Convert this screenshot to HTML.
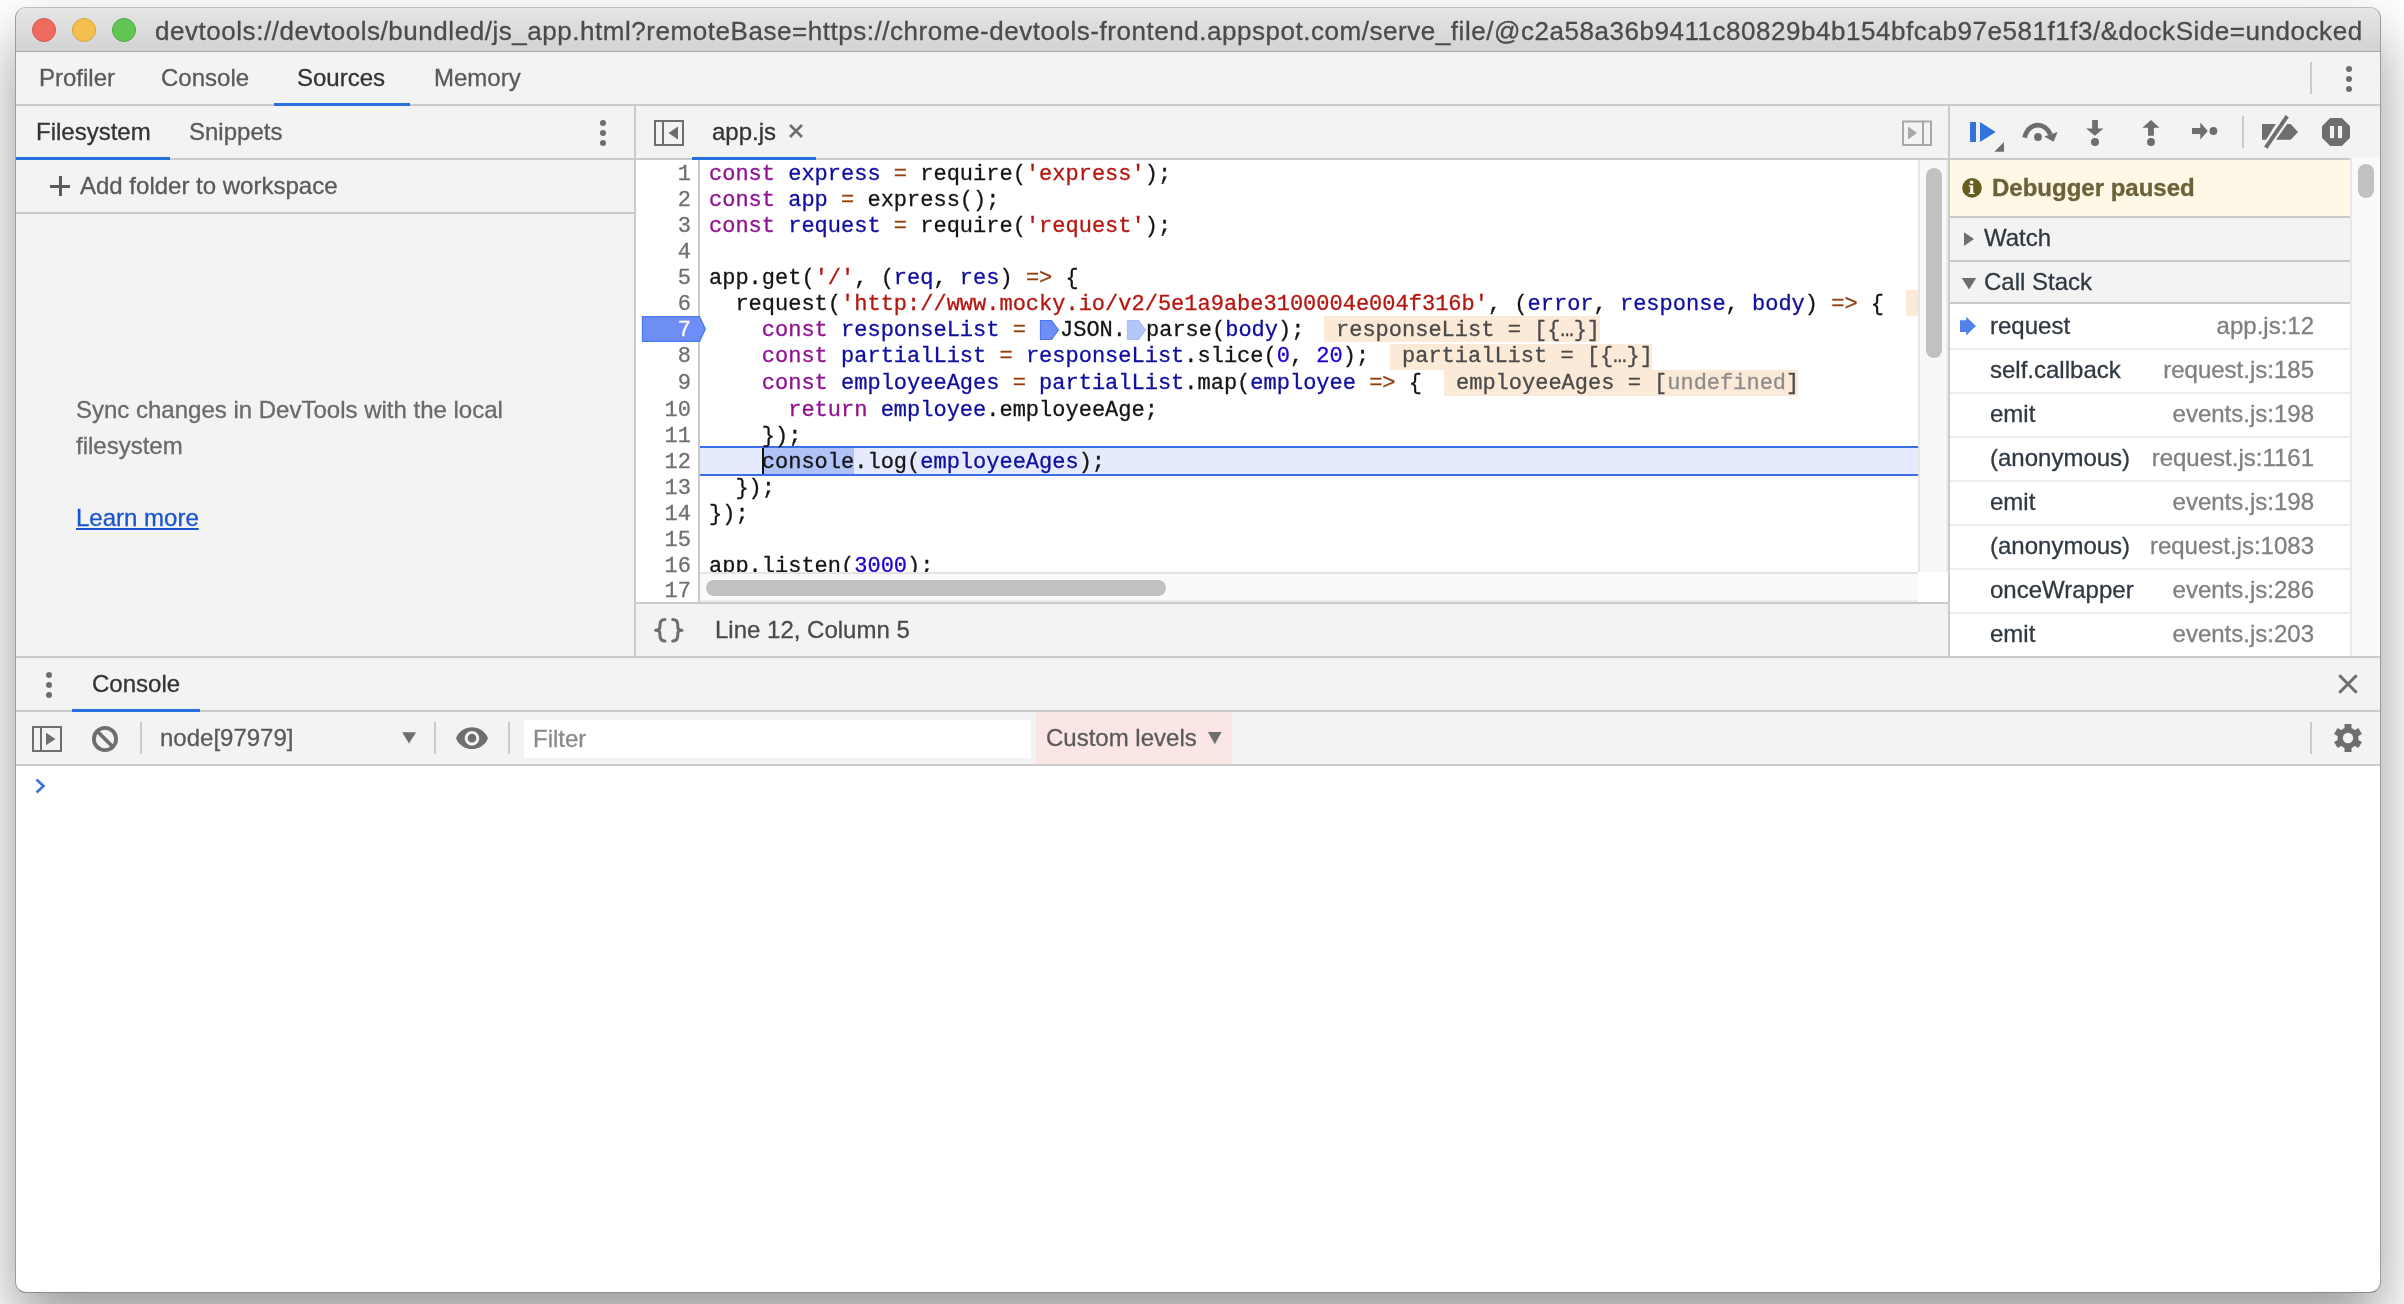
<!DOCTYPE html>
<html><head><meta charset="utf-8">
<style>
*{box-sizing:border-box;margin:0;padding:0}
html,body{width:2404px;height:1304px;overflow:hidden;background:#fff;font-family:"Liberation Sans",sans-serif}
.a{position:absolute}
svg.a{overflow:visible}
#win{position:absolute;left:15px;top:7px;width:2366px;height:1286px;border-radius:11px;overflow:hidden;background:#fff;border:1px solid #9c9c9c;border-top-color:#bcbcbc;border-bottom-color:#8c8c8c;box-shadow:0 30px 60px rgba(0,0,0,.4)}
#pg{will-change:transform;position:absolute;left:-16px;top:-8px;width:2404px;height:1304px}
.t{position:absolute;white-space:pre;font-size:24px;line-height:28px;color:#5a5a5a;-webkit-text-stroke:0.3px currentColor}
.m{position:absolute;white-space:pre;font-family:"Liberation Mono",monospace;font-size:22px;line-height:26px;color:#141414;-webkit-text-stroke:0.3px currentColor}
.k{color:#8f1290}.v{color:#0e0ea0}.s{color:#b5160f}.o{color:#91410f}.n{color:#1c00cf}.u{color:#8c8c8c}
</style></head><body>
<div id="win"><div id="pg">
<div class="a" style="left:0px;top:0px;width:2404px;height:51px;background:linear-gradient(#e8e8e8,#d3d3d3);"></div>
<div class="a" style="left:0px;top:51px;width:2404px;height:1px;background:#a6a6a6;"></div>
<div class="a" style="left:32px;top:18px;width:24px;height:24px;border-radius:50%;background:#ee6a5e;border:1px solid #d5574b"></div>
<div class="a" style="left:72px;top:18px;width:24px;height:24px;border-radius:50%;background:#f5bf4f;border:1px solid #d9a23a"></div>
<div class="a" style="left:112px;top:18px;width:24px;height:24px;border-radius:50%;background:#61c554;border:1px solid #4ea842"></div>
<div class="t" style="left:155px;top:16px;font-size:26px;line-height:30px;letter-spacing:0.54px;color:#4b4b4b">devtools://devtools/bundled/js_app.html?remoteBase=https://chrome-devtools-frontend.appspot.com/serve_file/@c2a58a36b9411c80829b4b154bfcab97e581f1f3/&amp;dockSide=undocked</div>
<div class="a" style="left:0px;top:52px;width:2404px;height:52px;background:#f3f3f3;"></div>
<div class="a" style="left:0px;top:104px;width:2404px;height:2px;background:#cbcbcb;"></div>
<div class="t" style="left:39px;top:64px;color:#5a5a5a;">Profiler</div>
<div class="t" style="left:161px;top:64px;color:#5a5a5a;">Console</div>
<div class="t" style="left:297px;top:64px;color:#333;">Sources</div>
<div class="t" style="left:434px;top:64px;color:#5a5a5a;">Memory</div>
<div class="a" style="left:274px;top:103px;width:136px;height:3px;background:#2670de;"></div>
<div class="a" style="left:2310px;top:62px;width:2px;height:32px;background:#cbcbcb;"></div>
<div class="a" style="left:2346px;top:66px;width:6px;height:6px;border-radius:50%;background:#6e6e6e"></div>
<div class="a" style="left:2346px;top:76px;width:6px;height:6px;border-radius:50%;background:#6e6e6e"></div>
<div class="a" style="left:2346px;top:86px;width:6px;height:6px;border-radius:50%;background:#6e6e6e"></div>
<div class="a" style="left:0px;top:106px;width:634px;height:550px;background:#f3f3f3;"></div>
<div class="a" style="left:0px;top:158px;width:634px;height:2px;background:#cbcbcb;"></div>
<div class="a" style="left:16px;top:157px;width:154px;height:3px;background:#2670de;"></div>
<div class="t" style="left:36px;top:118px;color:#333;">Filesystem</div>
<div class="t" style="left:189px;top:118px;color:#5a5a5a;">Snippets</div>
<div class="a" style="left:600px;top:120px;width:6px;height:6px;border-radius:50%;background:#6e6e6e"></div>
<div class="a" style="left:600px;top:130px;width:6px;height:6px;border-radius:50%;background:#6e6e6e"></div>
<div class="a" style="left:600px;top:140px;width:6px;height:6px;border-radius:50%;background:#6e6e6e"></div>
<div class="a" style="left:0px;top:212px;width:634px;height:2px;background:#cbcbcb;"></div>
<div class="t" style="left:80px;top:172px;color:#5a5a5a;">Add folder to workspace</div>
<div class="a" style="left:50px;top:184.5px;width:20px;height:3px;background:#5a5a5a;"></div>
<div class="a" style="left:58.5px;top:176px;width:3px;height:20px;background:#5a5a5a;"></div>
<div class="t" style="left:76px;top:396px;color:#6a6a6a;">Sync changes in DevTools with the local</div>
<div class="t" style="left:76px;top:432px;color:#6a6a6a;">filesystem</div>
<div class="t" style="left:76px;top:504px;color:#1a55d0;text-decoration:underline">Learn more</div>
<div class="a" style="left:634px;top:106px;width:2px;height:550px;background:#cbcbcb;"></div>
<div class="a" style="left:636px;top:106px;width:1312px;height:52px;background:#f3f3f3;"></div>
<div class="a" style="left:636px;top:158px;width:1312px;height:2px;background:#cbcbcb;"></div>
<svg class="a" style="left:652px;top:118px;" width="34" height="30" viewBox="652 118 34 30"><rect x="655" y="121" width="28" height="24" fill="none" stroke="#6e6e6e" stroke-width="2"/><rect x="662" y="121" width="2" height="24" fill="#6e6e6e"/><path d="M668.5 133L678 126.6V139.4Z" fill="#6e6e6e"/></svg>
<div class="t" style="left:712px;top:118px;color:#333;">app.js</div>
<svg class="a" style="left:786px;top:121px;" width="20" height="20" viewBox="786 121 20 20"><path d="M790 125L802 137M802 125L790 137" stroke="#6e6e6e" stroke-width="2.6"/></svg>
<div class="a" style="left:692px;top:157px;width:124px;height:3px;background:#2670de;"></div>
<svg class="a" style="left:1900px;top:118px;" width="34" height="30" viewBox="1900 118 34 30"><rect x="1903" y="121.5" width="28" height="23.5" fill="none" stroke="#a8a8a8" stroke-width="2"/><rect x="1922" y="121" width="2" height="24" fill="#a8a8a8"/><path d="M1908 126.5V139.5L1917 133Z" fill="#a8a8a8"/></svg>
<div class="a" style="left:636px;top:160px;width:1312px;height:442px;background:#fff;"></div>
<div class="a" style="left:698px;top:160px;width:2px;height:442px;background:#cacaca;"></div>
<div class="a" style="left:636px;top:602px;width:1312px;height:2px;background:#cbcbcb;"></div>
<div class="a" style="left:636px;top:604px;width:1312px;height:52px;background:#f3f3f3;"></div>
<svg class="a" style="left:650px;top:614px;" width="40" height="32" viewBox="650 614 40 32"><path d="M665 619.6C661.5 619.6 660.2 621 660 624.5L659.8 628C659.6 629.6 658.5 630.3 655.6 630.3C658.5 630.3 659.6 631 659.8 632.6L660 636.1C660.2 639.6 661.5 641 665 641M672.7 619.6C676.2 619.6 677.5 621 677.7 624.5L677.9 628C678.1 629.6 679.2 630.3 682.1 630.3C679.2 630.3 678.1 631 677.9 632.6L677.7 636.1C677.5 639.6 676.2 641 672.7 641" fill="none" stroke="#6e6e6e" stroke-width="3" stroke-linecap="round" stroke-linejoin="round"/></svg>
<div class="t" style="left:715px;top:616px;color:#4a4a4a;">Line 12, Column 5</div>
<div class="a" style="left:1948px;top:106px;width:2px;height:550px;background:#cbcbcb;"></div>
<div class="a" style="left:700px;top:446px;width:1218px;height:2px;background:#3a6ee6;"></div>
<div class="a" style="left:700px;top:448px;width:1218px;height:26px;background:#e5eafc;"></div>
<div class="a" style="left:700px;top:474px;width:1218px;height:2px;background:#3a6ee6;"></div>
<div class="a" style="left:764px;top:448px;width:90px;height:26px;background:#b1c2f6;"></div>
<div class="a" style="left:762px;top:448px;width:2px;height:26px;background:#111;"></div>
<div class="a" style="left:636px;top:160px;width:1282px;height:412px;overflow:hidden"><div class="a" style="left:-636px;top:-160px;width:2404px;height:1304px">
<div class="m" style="left:709px;top:162px"><span class="k">const</span> <span class="v">express</span> <span class="o">=</span> require(<span class="s">&#x27;express&#x27;</span>);</div>
<div class="m" style="left:709px;top:188px"><span class="k">const</span> <span class="v">app</span> <span class="o">=</span> express();</div>
<div class="m" style="left:709px;top:214px"><span class="k">const</span> <span class="v">request</span> <span class="o">=</span> require(<span class="s">&#x27;request&#x27;</span>);</div>
<div class="m" style="left:709px;top:266px">app.get(<span class="s">&#x27;/&#x27;</span>, (<span class="v">req</span>, <span class="v">res</span>) <span class="o">=&gt;</span> {</div>
<div class="m" style="left:709px;top:292px">  request(<span class="s">&#x27;http://www.mocky.io/v2/5e1a9abe3100004e004f316b&#x27;</span>, (<span class="v">error</span>, <span class="v">response</span>, <span class="v">body</span>) <span class="o">=&gt;</span> {</div>
<div class="m" style="left:709px;top:344px">    <span class="k">const</span> <span class="v">partialList</span> <span class="o">=</span> <span class="v">responseList</span>.slice(<span class="n">0</span>, <span class="n">20</span>);</div>
<div class="m" style="left:709px;top:371.4px">    <span class="k">const</span> <span class="v">employeeAges</span> <span class="o">=</span> <span class="v">partialList</span>.map(<span class="v">employee</span> <span class="o">=&gt;</span> {</div>
<div class="m" style="left:709px;top:397.6px">      <span class="k">return</span> <span class="v">employee</span>.employeeAge;</div>
<div class="m" style="left:709px;top:423.9px">    });</div>
<div class="m" style="left:709px;top:449.7px">    console.log(<span class="v">employeeAges</span>);</div>
<div class="m" style="left:709px;top:475.8px">  });</div>
<div class="m" style="left:709px;top:501.79999999999995px">});</div>
<div class="m" style="left:709px;top:553.7px">app.listen(<span class="n">3000</span>);</div>
<div class="m" style="left:709px;top:318px">    <span class="k">const</span> <span class="v">responseList</span> <span class="o">=</span> </div>
<svg class="a" style="left:1039px;top:318px;" width="24" height="24" viewBox="1039 318 24 24"><path d="M1040.5 320.5H1051.5L1058.5 330L1051.5 339.5H1040.5Z" fill="#6f8ef5" stroke="#4a76ef" stroke-width="1.2"/></svg>
<div class="m" style="left:1060.0px;top:318px">JSON.</div>
<svg class="a" style="left:1126px;top:318px;" width="24" height="24" viewBox="1126 318 24 24"><path d="M1127.5 320.5H1138.5L1145.5 330L1138.5 339.5H1127.5Z" fill="#b3c6f8" stroke="#a9bdf6" stroke-width="1.2"/></svg>
<div class="m" style="left:1146.0px;top:318px">parse(<span class="v">body</span>);</div>
<div class="a" style="left:1906px;top:290px;width:24px;height:25.5px;background:#fcead8;"></div>
<div class="m" style="left:1918px;top:292px;color:#4a4a4a"></div>
<div class="a" style="left:1324px;top:316px;width:276px;height:25.5px;background:#fcead8;"></div>
<div class="m" style="left:1336px;top:318px;color:#4a4a4a">responseList = [{…}]</div>
<div class="a" style="left:1390px;top:344px;width:262px;height:25.5px;background:#fcead8;"></div>
<div class="m" style="left:1402px;top:344px;color:#4a4a4a">partialList = [{…}]</div>
<div class="a" style="left:1444px;top:370px;width:354px;height:25.5px;background:#fcead8;"></div>
<div class="m" style="left:1456px;top:371.4px;color:#4a4a4a">employeeAges = [<span class="u">undefined</span>]</div>
</div></div>
<div class="m" style="left:636px;width:55px;text-align:right;top:162px;color:#707070">1</div>
<div class="m" style="left:636px;width:55px;text-align:right;top:188px;color:#707070">2</div>
<div class="m" style="left:636px;width:55px;text-align:right;top:214px;color:#707070">3</div>
<div class="m" style="left:636px;width:55px;text-align:right;top:240px;color:#707070">4</div>
<div class="m" style="left:636px;width:55px;text-align:right;top:266px;color:#707070">5</div>
<div class="m" style="left:636px;width:55px;text-align:right;top:292px;color:#707070">6</div>
<div class="m" style="left:636px;width:55px;text-align:right;top:344px;color:#707070">8</div>
<div class="m" style="left:636px;width:55px;text-align:right;top:371.4px;color:#707070">9</div>
<div class="m" style="left:636px;width:55px;text-align:right;top:397.6px;color:#707070">10</div>
<div class="m" style="left:636px;width:55px;text-align:right;top:423.9px;color:#707070">11</div>
<div class="m" style="left:636px;width:55px;text-align:right;top:449.7px;color:#707070">12</div>
<div class="m" style="left:636px;width:55px;text-align:right;top:475.8px;color:#707070">13</div>
<div class="m" style="left:636px;width:55px;text-align:right;top:501.79999999999995px;color:#707070">14</div>
<div class="m" style="left:636px;width:55px;text-align:right;top:527.9px;color:#707070">15</div>
<div class="m" style="left:636px;width:55px;text-align:right;top:553.7px;color:#707070">16</div>
<div class="m" style="left:636px;width:55px;text-align:right;top:579.4px;color:#707070">17</div>
<svg class="a" style="left:640px;top:314px;" width="70" height="30" viewBox="640 314 70 30"><path d="M642.5 316.6H699.5L705.3 329L699.5 341.3H642.5Z" fill="#6f8ef5" stroke="#4a76ef" stroke-width="1.3"/></svg>
<div class="m" style="left:636px;width:55px;text-align:right;top:318px;color:#fff">7</div>
<div class="a" style="left:1918px;top:160px;width:30px;height:412px;background:#f8f8f8;"></div>
<div class="a" style="left:1918px;top:160px;width:2px;height:412px;background:#e6e6e6;"></div>
<div class="a" style="left:1946px;top:160px;width:2px;height:412px;background:#ececec;"></div>
<div class="a" style="left:1926px;top:168px;width:16px;height:190px;background:#c1c1c1;border-radius:8px"></div>
<div class="a" style="left:700px;top:572px;width:1218px;height:30px;background:#fafafa;"></div>
<div class="a" style="left:700px;top:572px;width:1218px;height:2px;background:#e4e4e4;"></div>
<div class="a" style="left:700px;top:600px;width:1218px;height:2px;background:#ebebeb;"></div>
<div class="a" style="left:706px;top:580px;width:460px;height:16px;background:#c1c1c1;border-radius:8px"></div>
<div class="a" style="left:1950px;top:106px;width:430px;height:52px;background:#f3f3f3;"></div>
<div class="a" style="left:1950px;top:158px;width:400px;height:2px;background:#cbcbcb;"></div>
<svg class="a" style="left:1965px;top:115px;" width="45" height="40" viewBox="1965 115 45 40"><rect x="1970" y="122" width="6" height="20" fill="#3273dc"/><path d="M1980 122V142L1995.7 132Z" fill="#3273dc"/><path d="M1994.3 151.8H2004V142.1Z" fill="#6e6e6e"/></svg>
<svg class="a" style="left:2018px;top:115px;" width="45" height="35" viewBox="2018 115 45 35"><path d="M2024.5 137.6C2027 129 2032 125.2 2038 125.2C2043 125.2 2047.5 128.5 2050.5 134.5" fill="none" stroke="#6e6e6e" stroke-width="4.8"/><path d="M2044.2 136.5L2057.6 132.1L2053.6 141.8Z" fill="#6e6e6e"/><circle cx="2038" cy="137" r="3.9" fill="#6e6e6e"/></svg>
<svg class="a" style="left:2080px;top:115px;" width="30" height="35" viewBox="2080 115 30 35"><path d="M2092.1 120H2097.9V128.4H2103.5L2094.9 135.8L2086.1 128.4H2092.1Z" fill="#6e6e6e"/><circle cx="2095" cy="142" r="4" fill="#6e6e6e"/></svg>
<svg class="a" style="left:2135px;top:115px;" width="30" height="35" viewBox="2135 115 30 35"><path d="M2151 120L2159.5 127.8H2153.9V135.8H2148V127.8H2142.3Z" fill="#6e6e6e"/><circle cx="2151" cy="142" r="3.95" fill="#6e6e6e"/></svg>
<svg class="a" style="left:2185px;top:115px;" width="35" height="35" viewBox="2185 115 35 35"><path d="M2192 128H2200.3V122.5L2207.8 131L2200.3 139.4V133.9H2192Z" fill="#6e6e6e"/><circle cx="2213.4" cy="131" r="3.9" fill="#6e6e6e"/></svg>
<div class="a" style="left:2242px;top:116px;width:2px;height:32px;background:#cbcbcb;"></div>
<svg class="a" style="left:2255px;top:110px;" width="50" height="45" viewBox="2255 110 50 45"><path d="M2262 124.1H2275.8L2266.1 139.7H2262Z" fill="#6e6e6e"/><path d="M2287.2 124.1H2290.7L2298 131.9L2290.7 139.7H2276.1Z" fill="#6e6e6e"/><path d="M2265.8 147.7L2287.2 116.2" stroke="#6e6e6e" stroke-width="3.9"/></svg>
<svg class="a" style="left:2318px;top:114px;" width="36" height="36" viewBox="2318 114 36 36"><path d="M2330.2 118H2341.8L2350 126.2V137.8L2341.8 146H2330.2L2322 137.8V126.2Z" fill="#6e6e6e"/><rect x="2330" y="126" width="4.1" height="12.1" fill="#f3f3f3"/><rect x="2338" y="126" width="4.1" height="12.1" fill="#f3f3f3"/></svg>
<div class="a" style="left:1950px;top:160px;width:400px;height:56px;background:#fef9e7;"></div>
<div class="a" style="left:1950px;top:216px;width:400px;height:2px;background:#cbcbcb;"></div>
<svg class="a" style="left:1958px;top:174px;" width="30" height="30" viewBox="1958 174 30 30"><circle cx="1972" cy="187.9" r="9.8" fill="#695d1e"/><circle cx="1971.6" cy="182.3" r="1.75" fill="#fff"/><path d="M1968.8 185.2H1973.2V192.7H1974.6V193.9H1968.7V192.7H1970.2V186.5H1968.8Z" fill="#fff"/></svg>
<div class="t" style="left:1992px;top:174px;color:#6a6138;font-weight:bold">Debugger paused</div>
<div class="a" style="left:1950px;top:218px;width:400px;height:42px;background:#f3f3f3;"></div>
<div class="a" style="left:1950px;top:260px;width:400px;height:2px;background:#cbcbcb;"></div>
<svg class="a" style="left:1960px;top:228px;" width="20" height="22" viewBox="1960 228 20 22"><path d="M1964 232.3V245.9L1974 239Z" fill="#6e6e6e"/></svg>
<div class="t" style="left:1984px;top:224px;color:#303942;">Watch</div>
<div class="a" style="left:1950px;top:262px;width:400px;height:40px;background:#f3f3f3;"></div>
<div class="a" style="left:1950px;top:302px;width:400px;height:2px;background:#cbcbcb;"></div>
<svg class="a" style="left:1958px;top:274px;" width="22" height="20" viewBox="1958 274 22 20"><path d="M1961.8 278H1976.2L1969 289.4Z" fill="#6e6e6e"/></svg>
<div class="t" style="left:1984px;top:268px;color:#303942;">Call Stack</div>
<div class="a" style="left:1950px;top:304px;width:400px;height:352px;background:#fff;"></div>
<div class="t" style="left:1990px;top:312px;color:#303942;">request</div>
<div class="t" style="left:2050px;width:264px;text-align:right;top:312px;color:#808080">app.js:12</div>
<div class="a" style="left:1950px;top:348px;width:400px;height:2px;background:#ececec;"></div>
<div class="t" style="left:1990px;top:356px;color:#303942;">self.callback</div>
<div class="t" style="left:2050px;width:264px;text-align:right;top:356px;color:#808080">request.js:185</div>
<div class="a" style="left:1950px;top:392px;width:400px;height:2px;background:#ececec;"></div>
<div class="t" style="left:1990px;top:400px;color:#303942;">emit</div>
<div class="t" style="left:2050px;width:264px;text-align:right;top:400px;color:#808080">events.js:198</div>
<div class="a" style="left:1950px;top:436px;width:400px;height:2px;background:#ececec;"></div>
<div class="t" style="left:1990px;top:444px;color:#303942;">(anonymous)</div>
<div class="t" style="left:2050px;width:264px;text-align:right;top:444px;color:#808080">request.js:1161</div>
<div class="a" style="left:1950px;top:480px;width:400px;height:2px;background:#ececec;"></div>
<div class="t" style="left:1990px;top:488px;color:#303942;">emit</div>
<div class="t" style="left:2050px;width:264px;text-align:right;top:488px;color:#808080">events.js:198</div>
<div class="a" style="left:1950px;top:524px;width:400px;height:2px;background:#ececec;"></div>
<div class="t" style="left:1990px;top:532px;color:#303942;">(anonymous)</div>
<div class="t" style="left:2050px;width:264px;text-align:right;top:532px;color:#808080">request.js:1083</div>
<div class="a" style="left:1950px;top:568px;width:400px;height:2px;background:#ececec;"></div>
<div class="t" style="left:1990px;top:576px;color:#303942;">onceWrapper</div>
<div class="t" style="left:2050px;width:264px;text-align:right;top:576px;color:#808080">events.js:286</div>
<div class="a" style="left:1950px;top:612px;width:400px;height:2px;background:#ececec;"></div>
<div class="t" style="left:1990px;top:620px;color:#303942;">emit</div>
<div class="t" style="left:2050px;width:264px;text-align:right;top:620px;color:#808080">events.js:203</div>
<svg class="a" style="left:1956px;top:312px;" width="24" height="28" viewBox="1956 312 24 28"><path d="M1960 320.2H1966.2V316.7L1976 326.1L1966.2 335.6V332H1960Z" fill="#4f82ea"/></svg>
<div class="a" style="left:2350px;top:158px;width:30px;height:498px;background:#fafafa;"></div>
<div class="a" style="left:2350px;top:158px;width:2px;height:498px;background:#e8e8e8;"></div>
<div class="a" style="left:2358px;top:164px;width:16px;height:34px;background:#c1c1c1;border-radius:8px"></div>
<div class="a" style="left:0px;top:656px;width:2404px;height:2px;background:#cbcbcb;"></div>
<div class="a" style="left:0px;top:658px;width:2404px;height:52px;background:#f3f3f3;"></div>
<div class="a" style="left:0px;top:710px;width:2404px;height:2px;background:#cbcbcb;"></div>
<div class="a" style="left:0px;top:712px;width:2404px;height:52px;background:#f3f3f3;"></div>
<div class="a" style="left:0px;top:764px;width:2404px;height:2px;background:#cbcbcb;"></div>
<div class="a" style="left:46px;top:672px;width:6px;height:6px;border-radius:50%;background:#6e6e6e"></div>
<div class="a" style="left:46px;top:682px;width:6px;height:6px;border-radius:50%;background:#6e6e6e"></div>
<div class="a" style="left:46px;top:692px;width:6px;height:6px;border-radius:50%;background:#6e6e6e"></div>
<div class="t" style="left:92px;top:670px;color:#333;">Console</div>
<div class="a" style="left:72px;top:709px;width:128px;height:3px;background:#2670de;"></div>
<svg class="a" style="left:2334px;top:670px;" width="28" height="28" viewBox="2334 670 28 28"><path d="M2339.3 675.3L2356.7 692.7M2356.7 675.3L2339.3 692.7" stroke="#6e6e6e" stroke-width="3"/></svg>
<svg class="a" style="left:28px;top:722px;" width="40" height="34" viewBox="28 722 40 34"><rect x="33" y="727" width="28" height="24" fill="none" stroke="#6e6e6e" stroke-width="2"/><rect x="40" y="727" width="2" height="24" fill="#6e6e6e"/><path d="M46 732.8V745.2L55.5 739Z" fill="#6e6e6e"/></svg>
<svg class="a" style="left:88px;top:722px;" width="34" height="34" viewBox="88 722 34 34"><circle cx="105" cy="739" r="11.1" fill="none" stroke="#6e6e6e" stroke-width="3.8"/><path d="M97.5 731.5L112.5 746.5" stroke="#6e6e6e" stroke-width="3.8"/></svg>
<div class="a" style="left:140px;top:722px;width:2px;height:32px;background:#cbcbcb;"></div>
<div class="t" style="left:160px;top:723.5px;color:#5a5a5a;">node[97979]</div>
<svg class="a" style="left:398px;top:728px;" width="22" height="20" viewBox="398 728 22 20"><path d="M402.2 732.2H416L409 743.6Z" fill="#6e6e6e"/></svg>
<div class="a" style="left:434px;top:722px;width:2px;height:32px;background:#cbcbcb;"></div>
<svg class="a" style="left:452px;top:722px;" width="40" height="34" viewBox="452 722 40 34"><g transform="translate(454.54 720.74) scale(1.455)"><path d="M12 4.5C7 4.5 2.73 7.61 1 12c1.73 4.39 6 7.5 11 7.5s9.27-3.11 11-7.5c-1.73-4.39-6-7.5-11-7.5zM12 17c-2.76 0-5-2.24-5-5s2.24-5 5-5 5 2.24 5 5-2.24 5-5 5zm0-8c-1.66 0-3 1.34-3 3s1.34 3 3 3 3-1.34 3-3-1.34-3-3-3z" fill="#6e6e6e"/></g></svg>
<div class="a" style="left:508px;top:722px;width:2px;height:32px;background:#cbcbcb;"></div>
<div class="a" style="left:524px;top:720px;width:507px;height:38px;background:#fff;"></div>
<div class="t" style="left:533px;top:725px;color:#8a8a8a;">Filter</div>
<div class="a" style="left:1036px;top:712px;width:196px;height:52px;background:#fbe6e6;"></div>
<div class="t" style="left:1046px;top:724px;color:#5a5a5a;">Custom levels</div>
<svg class="a" style="left:1204px;top:728px;" width="22" height="20" viewBox="1204 728 22 20"><path d="M1208 732H1221.6L1214.8 744.3Z" fill="#6e6e6e"/></svg>
<div class="a" style="left:2310px;top:722px;width:2px;height:32px;background:#cbcbcb;"></div>
<svg class="a" style="left:2330px;top:720px;" width="36" height="36" viewBox="2330 720 36 36"><circle cx="2348" cy="738" r="10.5" fill="#6e6e6e"/><rect x="2344.5" y="724" width="7" height="28" fill="#6e6e6e" transform="rotate(0 2348 738)"/><rect x="2344.5" y="724" width="7" height="28" fill="#6e6e6e" transform="rotate(60 2348 738)"/><rect x="2344.5" y="724" width="7" height="28" fill="#6e6e6e" transform="rotate(120 2348 738)"/><circle cx="2348" cy="738" r="5.2" fill="#f3f3f3"/></svg>
<svg class="a" style="left:30px;top:774px;" width="22" height="24" viewBox="30 774 22 24"><path d="M36.5 779.5L43.5 786L36.5 792.5" fill="none" stroke="#3a73de" stroke-width="2.6"/></svg>
</div></div></body></html>
